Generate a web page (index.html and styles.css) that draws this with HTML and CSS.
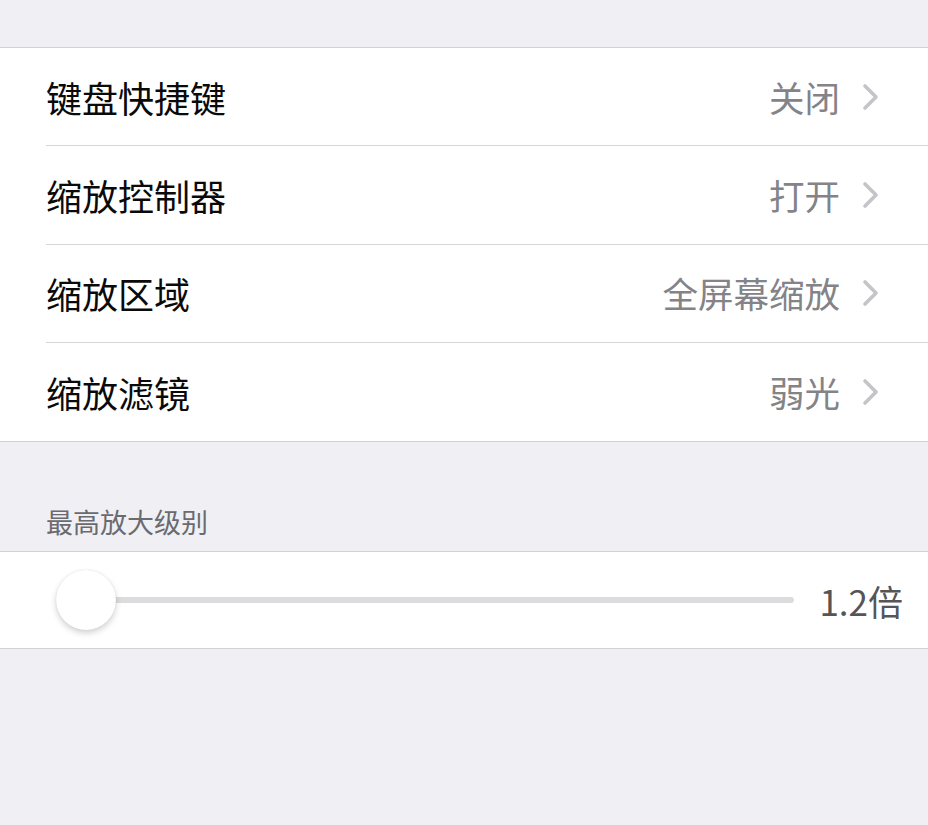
FILE: index.html
```html
<!DOCTYPE html>
<html lang="zh">
<head>
<meta charset="utf-8">
<link rel="stylesheet" href="styles.css">
</head>
<body>
<div class="top-gap"></div>
<div class="group">
  <div class="row">
    <div class="row-inner">
      <span class="label">键盘快捷键</span>
      <span class="value">关闭</span>
      <svg class="chev" width="18" height="28" viewBox="0 0 18 28"><polyline points="3,3 14,14 3,25" fill="none" stroke="#c4c4c9" stroke-width="3.6" stroke-linecap="round" stroke-linejoin="round"/></svg>
    </div>
  </div>
  <div class="row">
    <div class="row-inner">
      <span class="label">缩放控制器</span>
      <span class="value">打开</span>
      <svg class="chev" width="18" height="28" viewBox="0 0 18 28"><polyline points="3,3 14,14 3,25" fill="none" stroke="#c4c4c9" stroke-width="3.6" stroke-linecap="round" stroke-linejoin="round"/></svg>
    </div>
  </div>
  <div class="row">
    <div class="row-inner">
      <span class="label">缩放区域</span>
      <span class="value">全屏幕缩放</span>
      <svg class="chev" width="18" height="28" viewBox="0 0 18 28"><polyline points="3,3 14,14 3,25" fill="none" stroke="#c4c4c9" stroke-width="3.6" stroke-linecap="round" stroke-linejoin="round"/></svg>
    </div>
  </div>
  <div class="row">
    <div class="row-inner last">
      <span class="label">缩放滤镜</span>
      <span class="value">弱光</span>
      <svg class="chev" width="18" height="28" viewBox="0 0 18 28"><polyline points="3,3 14,14 3,25" fill="none" stroke="#c4c4c9" stroke-width="3.6" stroke-linecap="round" stroke-linejoin="round"/></svg>
    </div>
  </div>
</div>
<div class="section-header">最高放大级别</div>
<div class="group">
  <div class="slider-row">
    <div class="slider">
      <div class="track"></div>
      <div class="thumb"></div>
    </div>
    <span class="slider-value">1.2倍</span>
  </div>
</div>
</body>
</html>
```

FILE: styles.css
```css
html, body {
  margin: 0;
  padding: 0;
}
body {
  background: #efeff4;
  font-family: "Noto Sans CJK SC", "Noto Sans", sans-serif;
  width: 928px;
  height: 825px;
  overflow: hidden;
}
.top-gap {
  height: 47px;
}
.group {
  background: #ffffff;
  border-top: 1px solid #d2d1d6;
  border-bottom: 1px solid #d2d1d6;
}
.row {
  padding-left: 46px;
  height: 98.25px;
  box-sizing: border-box;
}
.row-inner {
  height: 100%;
  box-sizing: border-box;
  border-bottom: 1px solid #d6d5da;
  display: flex;
  align-items: center;
  padding-right: 48px;
}
.row-inner.last {
  border-bottom: none;
}
.label {
  font-size: 36px;
  color: #0a0a0a;
  flex: 1;
  line-height: 1;
}
.value {
  font-size: 35.5px;
  color: #838388;
  line-height: 1;
  margin-right: 22px;
}
.chev {
  display: block;
}
.section-header {
  height: 109px;
  box-sizing: border-box;
  display: flex;
  align-items: flex-end;
  padding-left: 46px;
  padding-bottom: 14px;
  font-size: 27px;
  line-height: 30px;
  color: #6a6a6f;
}
.slider-row {
  height: 96px;
  display: flex;
  align-items: center;
  padding-left: 56px;
  padding-right: 25px;
}
.slider {
  position: relative;
  flex: 1;
  height: 60px;
  display: flex;
  align-items: center;
  margin-right: 25px;
}
.track {
  flex: 1;
  height: 6px;
  border-radius: 3px;
  background: #dcdcdf;
}
.thumb {
  position: absolute;
  left: 0;
  top: 0;
  width: 60px;
  height: 60px;
  border-radius: 50%;
  background: #ffffff;
  box-shadow: 0 3px 6px rgba(0, 0, 0, 0.18), 0 0 1px rgba(0, 0, 0, 0.15);
}
.slider-value {
  font-size: 35px;
  color: #555558;
  line-height: 1;
}
```
